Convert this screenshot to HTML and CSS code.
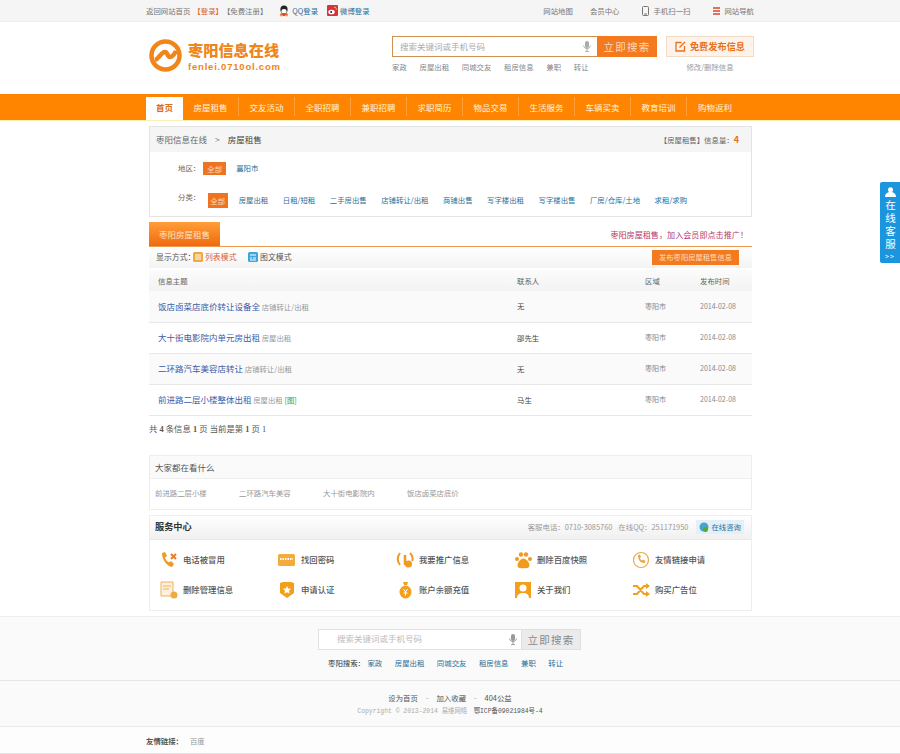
FILE: index.html
```html
<!DOCTYPE html>
<html lang="zh">
<head>
<meta charset="utf-8">
<title>枣阳房屋租售</title>
<link rel="stylesheet" href="styles.css">
</head>
<body>
<div class="topbar"><div class="wrap topbar-in">
  <div class="top-left">
    <span>返回网站首页</span><a class="login">【登录】</a><span class="reg">【免费注册】</span>
    <a class="social qq"><svg width="12" height="12" viewBox="0 0 12 12"><ellipse cx="6" cy="4.600" rx="3.600" ry="4.200" fill="#222"/><ellipse cx="6" cy="6.400" rx="2.600" ry="2.400" fill="#fff"/><path d="M2 9c1.200-1 2.400-1 4-1s2.800 0 4 1l-1.500 2h-5z" fill="#e2472f"/><path d="M2 10.500h3M7 10.500h3" stroke="#f2a51c" stroke-width="1.400"/></svg>QQ登录</a>
    <a class="social wb"><svg width="11" height="11" viewBox="0 0 11 11"><rect width="11" height="11" rx="1" fill="#d8333c"/><ellipse cx="4.500" cy="7" rx="3.200" ry="2.300" fill="#fff"/><circle cx="4.200" cy="7" r="1" fill="#222"/><path d="M7 2c1.500 0 2.500 1 2.300 2.600" stroke="#f7c948" fill="none"/></svg>微博登录</a>
  </div>
  <div class="top-right">
    <a>网站地图</a><a>会员中心</a>
    <a class="icon-link"><svg width="7" height="10" viewBox="0 0 7 10"><rect x=".5" y=".5" width="6" height="9" rx="1" fill="none" stroke="#777"/><path d="M2 8h3" stroke="#777"/></svg>手机扫一扫</a>
    <a class="icon-link"><svg width="7" height="8" viewBox="0 0 7 8"><path d="M0 1h7M0 4h7M0 7h7" stroke="#d8452c" stroke-width="1.500"/></svg>网站导航</a>
  </div>
</div></div>

<header class="wrap header">
  <div class="logo">
    <svg width="33" height="33" viewBox="0 0 33 33"><circle cx="16.500" cy="16.500" r="14" fill="none" stroke="#f08519" stroke-width="4.500"/><path d="M6 21c4-1 6-8 10-8 3 0 2 5 5 5 2 0 4-2 6-6" fill="none" stroke="#f08519" stroke-width="4.500"/></svg>
    <div class="logo-text"><strong>枣阳信息在线</strong><span>fenlei.0710ol.com</span></div>
  </div>
  <div class="search-col">
    <div class="search">
      <div class="search-input"><span>搜索关键词或手机号码</span><svg width="8" height="11" viewBox="0 0 8 11"><rect x="2" width="4" height="7" rx="2" fill="#aaa"/><path d="M.7 4.500c0 4 6.600 4 6.600 0M4 8v3M2 10.700h4" fill="none" stroke="#aaa"/></svg></div>
      <button class="search-btn">立即搜索</button>
    </div>
    <div class="hot"><a>家政</a><a>房屋出租</a><a>同城交友</a><a>租房信息</a><a>兼职</a><a>转让</a></div>
  </div>
  <div class="pub-col">
    <a class="pub"><svg width="11" height="11" viewBox="0 0 11 11"><path d="M6.500 1.500H1v8.500h8.500V5M4.500 6.500L10 1" fill="none" stroke="#e8701a" stroke-width="1.300"/></svg>免费发布信息</a>
    <a class="pub-edit">修改/删除信息</a>
  </div>
</header>

<nav class="nav"><div class="wrap nav-in">
  <a class="cur">首页</a><a>房屋租售</a><a>交友活动</a><a>全职招聘</a><a>兼职招聘</a><a>求职简历</a><a>物品交易</a><a>生活服务</a><a>车辆买卖</a><a>教育培训</a><a>购物返利</a>
</div></nav>

<main class="main">
  <section class="filter">
    <div class="crumb">
      <div><span>枣阳信息在线</span><i>&gt;</i><b>房屋租售</b></div>
      <div class="count">【房屋租售】信息量：<em>4</em></div>
    </div>
    <div class="f-row f-area"><label>地区：</label><a class="on">全部</a><a>襄阳市</a></div>
    <div class="f-row f-cat"><label>分类：</label><a class="on tall">全部</a><a>房屋出租</a><a>日租/短租</a><a>二手房出售</a><a>店铺转让/出租</a><a>商铺出售</a><a>写字楼出租</a><a>写字楼出售</a><a>厂房/仓库/土地</a><a>求租/求购</a></div>
  </section>

  <div class="tabs"><span class="tab">枣阳房屋租售</span><a class="promo">枣阳房屋租售，加入会员即点击推广！</a></div>
  <div class="modes">
    <div class="mode-list"><span>显示方式：</span>
      <a class="m1"><svg width="10" height="10" viewBox="0 0 10 10"><rect width="10" height="10" rx="1.500" fill="#f0a93e"/><path d="M2 3h6M2 5h6M2 7h6" stroke="#fff"/></svg>列表模式</a>
      <a class="m2"><svg width="10" height="10" viewBox="0 0 10 10"><rect width="10" height="10" rx="1.500" fill="#3fa6dc"/><path d="M2 3h6M2 6h2M5 6h3M2 8h6" stroke="#fff"/></svg>图文模式</a>
    </div>
    <a class="pub-small">发布枣阳房屋租售信息</a>
  </div>

  <table class="list">
    <thead><tr><th>信息主题</th><th>联系人</th><th>区域</th><th>发布时间</th></tr></thead>
    <tbody>
      <tr class="odd"><td><a>饭店卤菜店底价转让设备全</a> <span>店铺转让/出租</span></td><td>无</td><td class="g">枣阳市</td><td class="g">2014-02-08</td></tr>
      <tr><td><a>大十街电影院内单元房出租</a> <span>房屋出租</span></td><td>邵先生</td><td class="g">枣阳市</td><td class="g">2014-02-08</td></tr>
      <tr class="odd"><td><a>二环路汽车美容店转让</a> <span>店铺转让/出租</span></td><td>无</td><td class="g">枣阳市</td><td class="g">2014-02-08</td></tr>
      <tr><td><a>前进路二层小楼整体出租</a> <span>房屋出租</span> <em>[图]</em></td><td>马生</td><td class="g">枣阳市</td><td class="g">2014-02-08</td></tr>
    </tbody>
  </table>
  <p class="pager">共 <b>4</b> 条信息 <b>1</b> 页 当前是第 <b>1</b> 页 1</p>

  <section class="looking">
    <h3>大家都在看什么</h3>
    <div class="look-items"><a>前进路二层小楼</a><a>二环路汽车美容</a><a>大十街电影院内</a><a>饭店卤菜店底价</a></div>
  </section>

  <section class="service">
    <div class="svc-head">
      <strong>服务中心</strong>
      <div class="svc-tel"><span>客服电话：0710-3085760</span><span>在线QQ：251171950</span><a><svg width="10" height="11" viewBox="0 0 10 11"><circle cx="5" cy="5" r="4.500" fill="#4aa3c8"/><circle cx="6.500" cy="7.500" r="2.500" fill="#55a83a"/></svg>在线咨询</a></div>
    </div>
    <div class="svc-grid">
      <a><svg width="18" height="18" viewBox="0 0 18 18"><path d="M2 2l3-1 2 4-2 1.500c.5 2 2 4 4 5l2-1.500 3 3-2 3C7 15 2 9 2 2z" fill="#f09a1f"/><path d="M11 3l5 5M16 3l-5 5" stroke="#e8802a" stroke-width="2"/></svg>电话被冒用</a>
      <a><svg width="18" height="18" viewBox="0 0 18 18"><rect y="3" width="17" height="12" rx="1.500" fill="#f2ac3d"/><path d="M2 8h13" stroke="#fff" stroke-width="2" stroke-dasharray="1.500 1"/></svg>找回密码</a>
      <a><svg width="18" height="18" viewBox="0 0 18 18"><path d="M4 2C1 6 1 10 4 14M14 2c3 3 3 6 2 8" fill="none" stroke="#f09a1f" stroke-width="2"/><path d="M9 4v10" stroke="#f09a1f" stroke-width="2.500"/><circle cx="12.500" cy="13" r="3.500" fill="#f09a1f"/></svg>我要推广信息</a>
      <a><svg width="18" height="18" viewBox="0 0 18 18"><circle cx="3" cy="8" r="2" fill="#f09a1f"/><circle cx="7" cy="3.500" r="2.200" fill="#f09a1f"/><circle cx="12" cy="3.500" r="2.200" fill="#f09a1f"/><circle cx="16" cy="8" r="2" fill="#f09a1f"/><path d="M9.500 7.500c3 0 6 4 6 7 0 3-4 3-6 2.500-2 .5-6 .5-6-2.500 0-3 3-7 6-7z" fill="#f09a1f"/></svg>删除百度快照</a>
      <a><svg width="18" height="18" viewBox="0 0 18 18"><circle cx="9" cy="9" r="7.500" fill="none" stroke="#e8a84a" stroke-width="1.200"/><path d="M6 4l2-.5 1 2.500-1 1c.3 1 1 2 2 2.500l1-1 2.500 1.500-1 2C8 12.500 6 8 6 4z" fill="#e8a84a"/></svg>友情链接申请</a>
      <a><svg width="18" height="18" viewBox="0 0 18 18"><path d="M1 1h12v14H1z" fill="#fdf0dc" stroke="#efb25c"/><path d="M3 5h8M3 8h6" stroke="#efb25c"/><circle cx="14" cy="14" r="3.500" fill="#f0a93e"/></svg>删除管理信息</a>
      <a><svg width="18" height="18" viewBox="0 0 18 18"><path d="M2 2l3-1h8l3 1v10l-7 5-7-5z" fill="#f2a01c"/><path d="M9 5l1.200 2.500 2.800.3-2 1.900.5 2.800L9 11.200l-2.500 1.300.5-2.800-2-1.900 2.800-.3z" fill="#fff"/></svg>申请认证</a>
      <a><svg width="18" height="18" viewBox="0 0 18 18"><path d="M7 1h5l-1 3h-3z" fill="#f2a01c"/><ellipse cx="9.500" cy="11" rx="6" ry="6.500" fill="#f2a01c"/><path d="M7.500 8l2 3 2-3M9.500 11v3.500M7.500 12h4" stroke="#fff" fill="none"/></svg>账户余额充值</a>
      <a><svg width="18" height="18" viewBox="0 0 18 18"><rect x="1" y="1" width="16" height="16" fill="#f2a01c"/><circle cx="9" cy="7" r="3.500" fill="#fff"/><path d="M3 17c0-4 3-5 6-5s6 1 6 5z" fill="#fff"/></svg>关于我们</a>
      <a><svg width="18" height="18" viewBox="0 0 18 18"><path d="M1 5h4l7 8h3M1 13h4l7-8h3" fill="none" stroke="#f2a01c" stroke-width="2"/><path d="M14 2l4 3-4 3zM14 10l4 3-4 3z" fill="#f2a01c"/></svg>购买广告位</a>
    </div>
  </section>
</main>

<footer class="footer">
  <div class="f-search-area">
    <div class="f-search">
      <div class="f-input"><span>搜索关键词或手机号码</span><svg width="8" height="11" viewBox="0 0 8 11"><rect x="2" width="4" height="7" rx="2" fill="#999"/><path d="M.7 4.500c0 4 6.600 4 6.600 0M4 8v3M2 10.700h4" fill="none" stroke="#999"/></svg></div>
      <button class="f-btn">立即搜索</button>
    </div>
    <div class="f-hot"><b>枣阳搜索：</b><a>家政</a><a>房屋出租</a><a>同城交友</a><a>租房信息</a><a>兼职</a><a>转让</a></div>
  </div>
  <div class="f-info">
    <p class="f-links"><a>设为首页</a><i>-</i><a>加入收藏</a><i>-</i><a>404公益</a></p>
    <p class="f-copy">Copyright © 2013-2014 易维网络　<span>鄂ICP备09021984号-4</span></p>
  </div>
  <div class="f-friend"><div class="wrap"><b>友情链接：</b><a>百度</a></div></div>
</footer>

<aside class="kefu">
  <svg width="11" height="10" viewBox="0 0 11 10"><circle cx="5.500" cy="2.800" r="2.500" fill="#fff"/><path d="M0 10c0-3.500 2.500-5 5.500-5s5.500 1.500 5.500 5z" fill="#fff"/></svg>
  <span>在线客服</span><small>&gt;&gt;</small>
</aside>
</body>
</html>
```
FILE: styles.css
```css
* { box-sizing: border-box; }
html, body { margin: 0; padding: 0; }
body { position: relative; background: #fff; color: #666; font: 7.4px/1.3 "Noto Sans CJK SC", "Liberation Sans", sans-serif; height: 754px; overflow: hidden; }
a { color: inherit; text-decoration: none; }
p, h3 { margin: 0; }
.wrap { width: 608px; margin: 0 auto; }

.topbar { height: 22px; background: #f5f5f5; border-bottom: 1px solid #eee; }
.topbar-in { display: flex; justify-content: space-between; align-items: center; height: 21px; color: #777; }
.top-left, .top-right { display: flex; align-items: center; }
.login { color: #d9622b; margin-left: 3px; }
.reg { margin-right: 11px; }
.social { display: flex; align-items: center; gap: 2px; color: #2a6f97; margin-right: 9px; }
.top-right a { margin-right: 17px; }
.top-right a:nth-child(2) { margin-right: 23px; }
.top-right a:nth-child(3) { margin-right: 23px; }
.top-right a:last-child { margin-right: 0; }
.icon-link { display: flex; align-items: center; gap: 4px; }

.header { height: 72px; display: flex; position: relative; }
.logo { display: flex; gap: 6px; align-items: flex-start; padding: 17px 0 0 3px; width: 246px; }
.logo-text { display: flex; flex-direction: column; color: #f08519; }
.logo-text strong { font-size: 15.200px; line-height: 16px; height: 18px; margin-top: 2px; font-weight: 900; }
.logo-text span { font: bold 9.500px/12px "Liberation Sans", sans-serif; letter-spacing: .8px; margin-top: 2px; white-space: nowrap; }
.search-col { width: 274px; padding-top: 14px; }
.search { display: flex; width: 265px; height: 21px; }
.search-input { flex: 1; display: flex; justify-content: space-between; align-items: center; padding: 0 6px 0 7px; border: 1px solid #d09050; border-right: 0; color: #aaa; background: #fff; font-size: 8.500px; }
.search-btn { width: 60px; border: 0; padding: 0; background: #f37a1f; color: #fcd9bd; font: 10.500px "Noto Sans CJK SC", sans-serif; letter-spacing: 1.300px; }
.hot { display: flex; gap: 12.700px; margin-top: 4px; color: #888; height: 12px; line-height: 12px; }
.pub-col { width: 88px; padding-top: 14px; display: flex; flex-direction: column; align-items: center; }
.pub { display: flex; align-items: center; justify-content: center; gap: 4px; width: 88px; height: 21px; background: #fdf3ea; border: 1px solid #f2dcc8; color: #e8701a; font-size: 9.200px; font-weight: 700; }
.pub-edit { margin-top: 4px; color: #999; line-height: 12px; }

.nav { height: 27px; background: #ff8500; border-bottom: 1px solid #fdeeb8; }
.nav-in { display: flex; height: 26px; color: #fff2dc; }
.nav-in a { width: 56px; height: 19px; margin-top: 3px; padding-top: 2px; text-align: center; font-size: 8.500px; line-height: 16px; border-right: 1px solid #ffa03a; }
.nav-in a.cur { width: 37px; height: 23px; background: #fff; color: #d9701e; font-weight: 700; border: 0; line-height: 16px; padding-top: 2px; }
.nav-in a:last-child { border-right: 0; }

.main { width: 603px; margin: 5px 0 0 149px; }
.filter { height: 91px; border: 1px solid #e4e4e4; }
.crumb { height: 25px; background: #f5f5f5; display: flex; justify-content: space-between; align-items: center; padding: 0 12px 0 6px; font-size: 8.500px; }
.crumb i { font-style: normal; margin: 0 8px; color: #888; }
.crumb b { font-weight: 400; color: #444; }
.count { font-size: 7.400px; }
.count em { color: #e8701a; font-style: normal; font-weight: 700; font-size: 9px; }
.f-row { display: flex; align-items: center; color: #2a6f97; }
.f-row label { color: #666; }
.f-area { margin-top: 9px; padding-left: 28px; height: 14px; }
.f-area a { margin-left: 10px; }
.f-area a.on { margin-left: 3px; width: 23px; text-align: center; padding: 0; }
.f-row a.on { background: #f0731f; color: #fbd8bd; line-height: 13px; }
.f-cat { margin-top: 17px; padding-left: 28px; gap: 14.500px; height: 16px; }
.f-cat label { margin-right: -7px; transform: translateY(-3px); }
.f-row a.tall { line-height: 15px; width: 20px; text-align: center; margin-right: -3.500px; }

.tabs { height: 25px; margin-top: 5px; display: flex; justify-content: space-between; align-items: flex-start; border-bottom: 1px solid #ee9a50; }
.tab { width: 71px; height: 24px; line-height: 24px; text-align: center; background: linear-gradient(#ff9e38, #f06a10); color: #fde2c8; font-size: 8.500px; }
.promo { color: #b43a6c; font-size: 8.100px; line-height: 25px; margin-right: 4px; }
.modes { height: 21px; background: linear-gradient(#fff, #f4f4f4); display: flex; justify-content: space-between; align-items: center; padding: 0 13px 0 7px; color: #555; font-size: 7.900px; }
.mode-list, .m1, .m2 { display: flex; align-items: center; gap: 2px; }
.mode-list { gap: 0; }
.m1 { color: #d9622b; margin: 0 11.500px 0 -2.500px; }
.pub-small { width: 87px; height: 15px; line-height: 15px; text-align: center; background: #f37a1f; color: #fddcc0; font-size: 7.300px; }

.list { width: 100%; margin-top: 2px; border-collapse: collapse; table-layout: fixed; }
.list th { height: 21px; font-weight: 400; text-align: left; background: linear-gradient(#fbfbfb, #f3f3f3); padding: 0; color: #666; }
.list th:nth-child(1) { width: 368px; }
.list th:nth-child(2) { width: 128px; }
.list th:nth-child(3) { width: 55px; }
.list td { height: 31px; padding: 0; border-bottom: 1px solid #e8e8e8; color: #444; }
.list tr.odd td { background: #fafafa; }
.list td a { color: #3b5da8; font-size: 8.500px; }
.list td span { color: #999; }
.list td em { color: #3c9a2e; font-style: normal; }
.list td.g { color: #888; font-size: 7px; }
.list th:nth-child(1), .list td:nth-child(1) { padding-left: 9px; }
.pager { margin-top: 7px; line-height: 13px; color: #555; font-family: "Liberation Serif", "Noto Sans CJK SC", serif; font-size: 8.400px; }
.pager b { font-weight: 700; }

.looking { margin-top: 19px; height: 55px; border: 1px solid #eee; }
.looking h3 { height: 23px; line-height: 22px; font-weight: 400; font-size: 8.500px; background: #fafafa; border-bottom: 1px solid #eee; padding-left: 5px; color: #555; }
.look-items { display: flex; padding: 9px 0 0 5px; color: #999; }
.look-items a { width: 84px; }

.service { margin-top: 5px; height: 96px; border: 1px solid #eee; }
.svc-head { height: 24px; background: linear-gradient(#fff, #f0f0f0); border-bottom: 1px solid #e8e8e8; display: flex; justify-content: space-between; align-items: center; padding: 0 7px 0 5px; }
.svc-head strong { color: #333; font-size: 9.200px; }
.svc-tel { display: flex; align-items: center; gap: 6px; color: #999; }
.svc-tel a { display: flex; align-items: center; gap: 2px; height: 14px; padding: 0 3px; background: #e4f0f8; color: #2a6f97; margin-left: 2px; }
.svc-grid { display: grid; grid-template-columns: repeat(5, 118px); grid-auto-rows: 30px; padding: 5px 0 0 10px; }
.svc-grid a { display: flex; align-items: center; gap: 5px; color: #555; font-weight: 500; font-size: 8.400px; }
.svc-grid svg { flex: none; }

.footer { margin-top: 5px; background: #fafafa; border-top: 1px solid #eee; }
.f-search-area { height: 64px; padding-top: 12px; border-bottom: 1px solid #e6e6e6; }
.f-search { display: flex; width: 263px; height: 21px; margin-left: 318px; }
.f-input { flex: 1; display: flex; justify-content: space-between; align-items: center; padding: 0 4px 0 18px; background: #fff; border: 1px solid #e2e2e2; border-right: 0; color: #bbb; font-size: 8.500px; }
.f-btn { width: 60px; padding: 0; border: 1px solid #e0e0e0; background: #ebebeb; color: #888; font: 10.500px "Noto Sans CJK SC", sans-serif; letter-spacing: 1.300px; }
.f-hot { display: flex; gap: 12.500px; margin: 7px 0 0; padding-left: 328px; color: #2a6f97; line-height: 12px; }
.f-hot b { font-weight: 400; color: #333; margin-right: -10px; }
.f-info { height: 46px; padding-top: 10px; border-bottom: 1px solid #e9e9e9; text-align: center; }
.f-links { line-height: 13px; color: #555; }
.f-links i { font-style: normal; margin: 0 8px; color: #999; }
.f-copy { margin-top: 2px; color: #aaa; font: 6.400px/11px "Liberation Mono", "Noto Sans CJK SC", monospace; }
.f-copy span { color: #555; }
.f-friend { height: 27px; border-bottom: 1px solid #e4e4e4; line-height: 27px; background: #fdfdfd; color: #999; }
.f-friend b { color: #555; margin-right: 7px; }

.kefu { position: absolute; left: 880px; top: 182px; width: 20px; height: 81px; background: #1b95de; border-radius: 2px 0 0 2px; color: #fff; display: flex; flex-direction: column; align-items: center; padding-top: 5px; font-size: 10.500px; }
.kefu svg { margin-bottom: 3px; }
.kefu span { writing-mode: vertical-rl; letter-spacing: 2.500px; line-height: 14px; }
.kefu small { font-size: 7px; line-height: 9px; letter-spacing: 1px; }
```
